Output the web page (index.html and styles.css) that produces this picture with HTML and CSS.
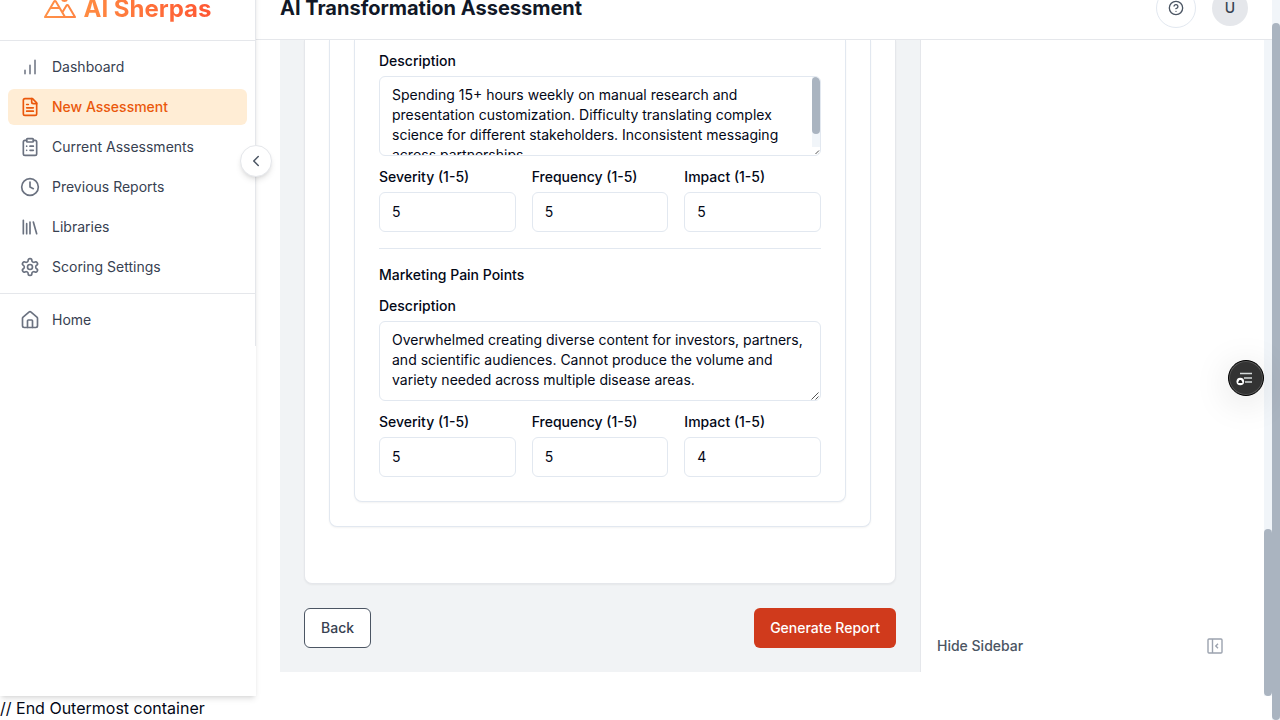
FILE: index.html
```html
<!DOCTYPE html>
<html lang="en">
<head>
<meta charset="utf-8">
<title>AI Transformation Assessment</title>
<link rel="stylesheet" href="styles.css">
</head>
<body>
<div class="page">
  <div class="document">
    <div class="app">
      <aside class="sidebar">
        <div class="brand">
          <svg class="brand-icon" viewBox="0 0 256 256"><defs><linearGradient id="brand" x1="0" x2="1" y1="0" y2="0"><stop offset="0" stop-color="#ff9248"/><stop offset="1" stop-color="#ff8443"/></linearGradient></defs><path fill="url(#brand)" d="M164,80a28,28,0,1,0-28-28A28,28,0,0,0,164,80Zm0-40a12,12,0,1,1-12,12A12,12,0,0,1,164,40Zm90.88,155.92-54.56-92.08A15.87,15.87,0,0,0,186.55,96h0a15.85,15.85,0,0,0-13.76,7.84L146.63,148l-44.84-76.1a16,16,0,0,0-27.58,0L1.11,195.94A8,8,0,0,0,8,208H248a8,8,0,0,0,6.88-12.08ZM88,80l23.57,40H64.43ZM22,192l33-56h66l18.74,31.8,0,0L154,192Zm150.57,0-16.66-28.28L186.55,112,234,192Z"/></svg>
          <span class="brand-name">AI Sherpas</span>
        </div>
        <nav class="nav">
          <div class="nav-group">
            <a class="nav-item"><svg class="icon bars" viewBox="0 0 24 24"><path d="M12 20V10M18 20V4M6 20v-4"/></svg>Dashboard</a>
            <a class="nav-item active"><svg class="icon" viewBox="0 0 24 24"><path d="M15 2H6a2 2 0 0 0-2 2v16a2 2 0 0 0 2 2h12a2 2 0 0 0 2-2V7Z"/><path d="M14 2v4a2 2 0 0 0 2 2h4M10 9H8M16 13H8M16 17H8"/></svg>New Assessment</a>
            <a class="nav-item"><svg class="icon" viewBox="0 0 24 24"><rect x="8" y="2" width="8" height="4" rx="1"/><path d="M16 4h2a2 2 0 0 1 2 2v14a2 2 0 0 1-2 2H6a2 2 0 0 1-2-2V6a2 2 0 0 1 2-2h2M12 11h4M12 16h4M8 11h.01M8 16h.01"/></svg>Current Assessments</a>
            <a class="nav-item"><svg class="icon" viewBox="0 0 24 24"><circle cx="12" cy="12" r="10"/><path d="M12 6v6l4 2"/></svg>Previous Reports</a>
            <a class="nav-item"><svg class="icon" viewBox="0 0 24 24"><path d="m16 6 4 14M12 6v14M8 8v12M4 4v16"/></svg>Libraries</a>
            <a class="nav-item"><svg class="icon" viewBox="0 0 24 24"><path d="M12.22 2h-.44a2 2 0 0 0-2 2v.18a2 2 0 0 1-1 1.73l-.43.25a2 2 0 0 1-2 0l-.15-.08a2 2 0 0 0-2.73.73l-.22.38a2 2 0 0 0 .73 2.73l.15.1a2 2 0 0 1 1 1.72v.51a2 2 0 0 1-1 1.74l-.15.09a2 2 0 0 0-.73 2.73l.22.38a2 2 0 0 0 2.73.73l.15-.08a2 2 0 0 1 2 0l.43.25a2 2 0 0 1 1 1.73V20a2 2 0 0 0 2 2h.44a2 2 0 0 0 2-2v-.18a2 2 0 0 1 1-1.73l.43-.25a2 2 0 0 1 2 0l.15.08a2 2 0 0 0 2.73-.73l.22-.39a2 2 0 0 0-.73-2.73l-.15-.08a2 2 0 0 1-1-1.74v-.5a2 2 0 0 1 1-1.74l.15-.09a2 2 0 0 0 .73-2.73l-.22-.38a2 2 0 0 0-2.73-.73l-.15.08a2 2 0 0 1-2 0l-.43-.25a2 2 0 0 1-1-1.73V4a2 2 0 0 0-2-2z"/><circle cx="12" cy="12" r="3"/></svg>Scoring Settings</a>
          </div>
          <div class="nav-group secondary">
            <a class="nav-item"><svg class="icon" viewBox="0 0 24 24"><path d="M15 21v-8a1 1 0 0 0-1-1h-4a1 1 0 0 0-1 1v8"/><path d="M3 10a2 2 0 0 1 .709-1.528l7-5.999a2 2 0 0 1 2.582 0l7 5.999A2 2 0 0 1 21 10v9a2 2 0 0 1-2 2H5a2 2 0 0 1-2-2z"/></svg>Home</a>
          </div>
        </nav>
        <button class="collapse"><svg class="icon small" viewBox="0 0 24 24"><path d="m15 18-6-6 6-6"/></svg></button>
      </aside>

      <div class="content">
        <header class="header">
          <h1 class="title">AI Transformation Assessment</h1>
          <div class="header-actions">
            <button class="help"><svg class="icon help-icon" viewBox="0 0 24 24"><circle cx="12" cy="12" r="10"/><path d="M9.09 9a3 3 0 0 1 5.83 1c0 2-3 3-3 3M12 17h.01"/></svg></button>
            <div class="avatar">U</div>
          </div>
        </header>
        <div class="body">
          <main class="main">
            <div class="columns">
              <section class="form-area">
                <div class="card outer">
                  <div class="card middle">
                    <div class="card inner">
                      <div class="field">
                        <label class="label">Description</label>
                        <div class="textarea scrolling">
                          <div class="textarea-text">Spending 15+ hours weekly on manual research and<br>presentation customization. Difficulty translating complex<br>science for different stakeholders. Inconsistent messaging<br>across partnerships.</div>
                          <div class="textarea-track"><div class="textarea-thumb"></div></div>
                          <svg class="grip clipped" viewBox="0 0 8 8"><path d="M3.5 7 7 3.5M6.5 7 7 6.5"/></svg>
                        </div>
                      </div>
                      <div class="scores">
                        <div class="field"><label class="label">Severity (1-5)</label><div class="input">5</div></div>
                        <div class="field"><label class="label">Frequency (1-5)</label><div class="input">5</div></div>
                        <div class="field"><label class="label">Impact (1-5)</label><div class="input">5</div></div>
                      </div>
                      <div class="pain-section">
                        <h4 class="section-title">Marketing Pain Points</h4>
                        <div class="field">
                          <label class="label">Description</label>
                          <div class="textarea">
                            <div class="textarea-text">Overwhelmed creating diverse content for investors, partners,<br>and scientific audiences. Cannot produce the volume and<br>variety needed across multiple disease areas.</div>
                            <svg class="grip" viewBox="0 0 8 8"><path d="M.5 7.5 7.5 .5M4.5 7.5l3-3"/></svg>
                          </div>
                        </div>
                        <div class="scores">
                          <div class="field"><label class="label">Severity (1-5)</label><div class="input">5</div></div>
                          <div class="field"><label class="label">Frequency (1-5)</label><div class="input">5</div></div>
                          <div class="field"><label class="label">Impact (1-5)</label><div class="input">4</div></div>
                        </div>
                      </div>
                    </div>
                  </div>
                </div>
                <div class="buttons">
                  <button class="btn back">Back</button>
                  <button class="btn generate">Generate Report</button>
                </div>
              </section>
              <aside class="right-panel">
                <span>Hide Sidebar</span>
                <svg class="panel-icon" viewBox="0 0 16 16"><rect x="1" y="1" width="14" height="14" rx="1"/><path d="M5.5 1v14M11 5.8 8.8 8l2.200 2.200"/></svg>
              </aside>
            </div>
          </main>
          <div class="inner-track"><div class="inner-thumb"></div></div>
        </div>
      </div>
    </div>
    <div class="footnote">// End Outermost container</div>
  </div>
  <div class="page-track"><div class="page-thumb"></div></div>
</div>
<div class="assistant">
  <svg viewBox="0 0 36 36"><path d="M12 13.500h12M16 18h8M17 22h7" stroke="#d5dada" stroke-width="1.600"/><circle cx="12.300" cy="21.500" r="3.800" fill="#fff"/><path d="M10.300 23v-1l1.200-2h1.600l1.200 2v1Z" fill="#222"/></svg>
</div>
</body>
</html>
```

FILE: styles.css
```css
* { box-sizing: border-box; }
body { margin: 0; height: 720px; overflow: hidden; background: #fff; color: #030817; font: 14px/20px Inter, "Liberation Sans", sans-serif; }
button { font: inherit; padding: 0; margin: 0; }
h1, h4 { margin: 0; }
.page { display: flex; height: 720px; }
.document { flex: 1; min-width: 0; height: 744px; margin-top: -24px; }
.app { display: flex; height: 720px; }

.sidebar { position: relative; z-index: 2; width: 256px; background: #fff; box-shadow: 0 4px 6px -1px rgba(0,0,0,.1), 0 2px 4px -2px rgba(0,0,0,.1); }
.brand { display: flex; align-items: center; justify-content: center; gap: 8px; height: 65px; border-bottom: 1px solid #e5e7eb; border-right: 1px solid #e5e7eb; }
.brand-icon { width: 32px; height: 32px; }
.brand-name { padding-top: 1px; font-size: 24px; line-height: 32px; font-weight: 700; color: transparent; background: linear-gradient(90deg, #ff8c42, #ff5733); background-clip: text; -webkit-background-clip: text; }
.nav { border-right: 1px solid #e5e7eb; height: 305px; }
.nav-group { display: flex; flex-direction: column; gap: 4px; padding: 8px; }
.secondary { border-top: 1px solid #e5e7eb; }
.nav-item { display: flex; align-items: center; gap: 12px; height: 36px; padding: 0 12px; border-radius: 6px; color: #374151; }
.active { background: #ffedd5; color: #ea580c; font-weight: 500; }
.icon { width: 20px; height: 20px; flex: none; fill: none; stroke: #6b7280; stroke-width: 2; stroke-linecap: round; stroke-linejoin: round; }
.bars { stroke-width: 1.8; }
.active .icon { stroke: #ea580c; }
.small { stroke: #4b5563; }
.collapse { position: absolute; right: -16px; top: 169px; width: 32px; height: 32px; display: flex; align-items: center; justify-content: center; background: #fff; border: 1px solid #e5e7eb; border-radius: 50%; box-shadow: 0 4px 6px -1px rgba(0,0,0,.1), 0 2px 4px -2px rgba(0,0,0,.1); }
.collapse .icon { width: 18px; height: 18px; }

.content { flex: 1; min-width: 0; display: flex; flex-direction: column; }
.header { display: flex; align-items: center; justify-content: space-between; height: 64px; padding: 0 24px; border-bottom: 1px solid #e5e7eb; flex: none; }
.title { font-size: 20px; line-height: 28px; font-weight: 700; color: #111827; }
.header-actions { display: flex; align-items: center; gap: 16px; }
.help { display: flex; align-items: center; justify-content: center; width: 40px; height: 40px; border: 1px solid #e2e8f0; border-radius: 50%; background: #fff; }
.help-icon { width: 16px; height: 16px; stroke: #4b5563; }
.avatar { display: flex; align-items: center; justify-content: center; width: 36px; height: 36px; border-radius: 50%; background: #e5e7eb; color: #374151; font-weight: 500; }
.body { display: flex; height: 656px; }
.main { flex: 1; overflow: hidden; padding: 0 0 24px 24px; }
.columns { display: flex; height: 632px; }
.form-area { width: 640px; padding: 0 24px; background: #f1f3f5; }
.card { background: #fff; border: 1px solid #e2e8f0; border-top: 0; box-shadow: 0 1px 2px rgba(0,0,0,.05); }
.outer { height: 544px; padding: 0 24px; border-color: #e5e7eb; border-radius: 0 0 8px 8px; }
.middle { height: 487px; padding: 0 24px; border-radius: 0 0 8px 8px; }
.inner { height: 462px; padding: 14px 24px 0; border-radius: 0 0 8px 8px; }
.label { display: block; line-height: 14px; font-weight: 500; margin-bottom: 8px; }
.textarea, .input { border: 1px solid #e2e8f0; border-radius: 6px; background: #fff; }
.textarea { position: relative; height: 80px; padding: 8px 12px; overflow: hidden; }
.textarea-text { white-space: nowrap; }
.textarea-track { position: absolute; top: 0; right: 0; width: 8px; height: 70px; background: #f1f5f9; }
.textarea-thumb { height: 57px; border-radius: 4px; background: #aab4c0; }
.grip { position: absolute; right: 1px; bottom: 0; width: 8px; height: 8px; fill: none; stroke: #555; stroke-width: 1; }
.clipped { right: 0; }
.scores { display: grid; grid-template-columns: repeat(3, 1fr); gap: 16px; margin-top: 14px; }
.input { height: 40px; padding: 9px 12px; }
.pain-section { margin-top: 16px; padding-top: 16px; border-top: 1px solid #e2e8f0; }
.section-title { font-size: 14px; line-height: 20px; font-weight: 500; margin-bottom: 14px; }
.buttons { display: flex; justify-content: space-between; margin-top: 24px; }
.btn { height: 40px; border-radius: 6px; padding: 0 16px; font-weight: 500; }
.back { border: 1px solid #4b5563; background: #fff; color: #374151; }
.generate { border: 0; background: #d03a1c; color: #fff; }
.right-panel { flex: 1; display: flex; align-items: flex-end; justify-content: space-between; padding: 0 41px 16px 16px; border-left: 1px solid #e5e7eb; color: #4b5563; font-weight: 500; }
.panel-icon { width: 16px; height: 16px; margin-bottom: 2px; fill: none; stroke: #9ca3af; stroke-width: 1.4; }
.inner-track { display: flex; align-items: flex-end; width: 8px; background: #f1f5f9; }
.inner-thumb { width: 8px; height: 167px; border-radius: 4px; background: #aab4c0; }
.footnote { font-size: 16px; line-height: 24px; }
.page-track { width: 8px; padding-top: 23px; background: #f1f5f9; }
.page-thumb { height: 697px; border-radius: 4px; background: #aab4c0; }
.assistant { position: absolute; z-index: 5; left: 1228px; top: 360px; width: 36px; height: 36px; border: 1px solid #000; border-radius: 50%; background: #333; box-shadow: 0 6px 36px rgba(0,0,0,.13), inset 0 0 0 1px #555; }
.assistant svg { display: block; width: 36px; height: 36px; margin: -1px; }
```
